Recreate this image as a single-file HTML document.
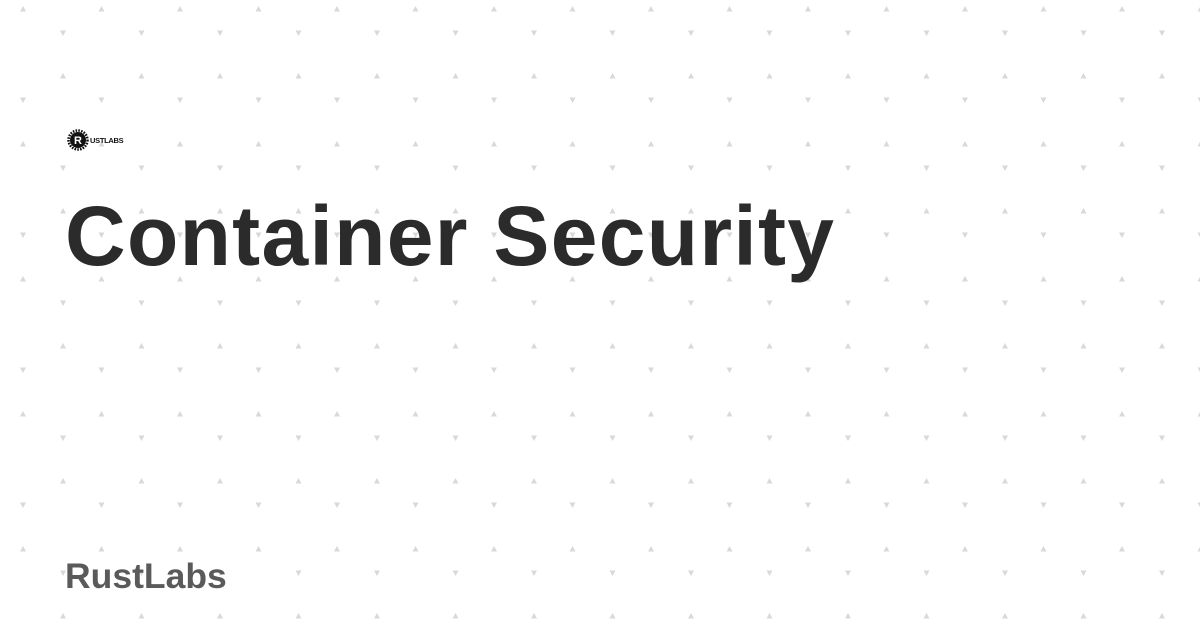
<!DOCTYPE html>
<html><head><meta charset="utf-8"><style>
html,body{margin:0;padding:0;}
body{width:1200px;height:630px;background:#fff;position:relative;overflow:hidden;font-family:"Liberation Sans",sans-serif;}
svg.bg{position:absolute;left:0;top:0;}
.title{position:absolute;left:65px;top:186px;font-size:84px;font-weight:bold;color:#2b2b2b;letter-spacing:1.3px;line-height:100px;white-space:nowrap;}
.brand{position:absolute;left:65px;top:554px;font-size:35.5px;font-weight:bold;color:#5a5a5a;line-height:44px;}
.logo{position:absolute;left:67px;top:129px;}
.logotext{position:absolute;left:90px;top:136px;font-size:7.5px;font-weight:bold;color:#111;letter-spacing:-0.3px;}
</style></head><body>
<svg class="bg" width="1200" height="630">
<defs>
<pattern id="p" x="0" y="0" width="78.5" height="135" patternUnits="userSpaceOnUse">
<path d="M20 11.5 L23 6 L26 11.5 Z" fill="#d6d9dd"/>
<path d="M60 30.5 L63 36 L66 30.5 Z" fill="#d6d9dd"/>
<path d="M60 78.5 L63 73 L66 78.5 Z" fill="#d6d9dd"/>
<path d="M20 97.5 L23 103 L26 97.5 Z" fill="#d6d9dd"/>
</pattern>
</defs>
<rect width="1200" height="630" fill="url(#p)"/>
</svg>
<svg class="logo" width="22" height="22" viewBox="0 0 22 22">
<circle cx="11" cy="11" r="9.5" fill="none" stroke="#111" stroke-width="2.5" stroke-dasharray="1.6 1.2"/>
<circle cx="11" cy="11" r="8" fill="#111"/>
<text x="11" y="15" text-anchor="middle" font-family="Liberation Sans" font-weight="bold" font-size="11" fill="#fff">R</text>
</svg>
<div class="logotext">USTLABS</div>
<div class="title">Container Security</div>
<div class="brand">RustLabs</div>
</body></html>
